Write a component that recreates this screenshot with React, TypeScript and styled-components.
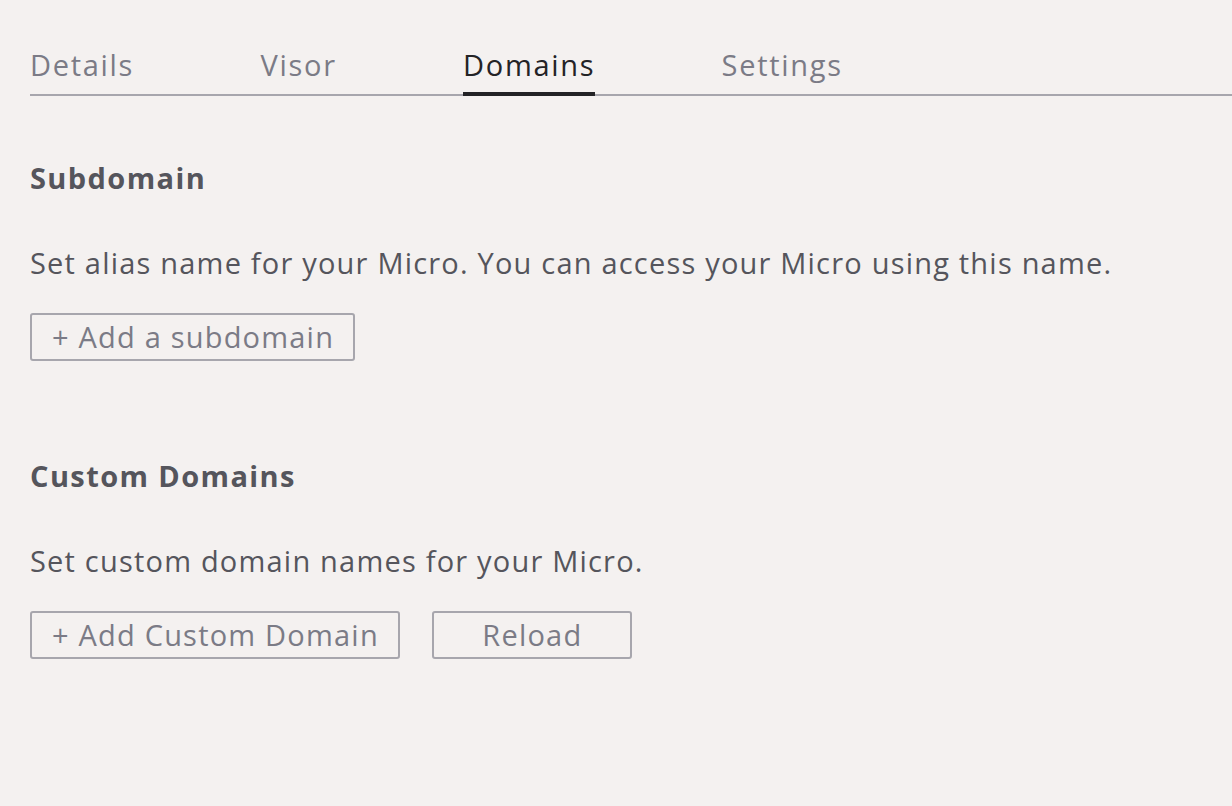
import React, { useState } from "react";
import styled, { createGlobalStyle } from "styled-components";

const GlobalStyle = createGlobalStyle`
  html, body {
    margin: 0;
    padding: 0;
    background: #f4f1f0;
  }
  body {
    font-family: "Open Sans", "Liberation Sans", sans-serif;
    -webkit-font-smoothing: antialiased;
  }
`;

const Page = styled.div`
  min-height: 806px;
  padding: 47px 0 0 30px;
  box-sizing: border-box;
  background: #f4f1f0;
`;

const TabBar = styled.div`
  display: flex;
  gap: 128px;
  border-bottom: 2px solid #a7a6ad;
`;

const Tab = styled.button<{ active: boolean }>`
  all: unset;
  cursor: pointer;
  font-size: 29px;
  letter-spacing: 1.7px;
  line-height: 36px;
  padding-bottom: 9px;
  margin-bottom: -2px;
  margin-right: -1.7px;
  color: ${({ active }) => (active ? "#232326" : "#7b7b86")};
  border-bottom: 4px solid ${({ active }) => (active ? "#232326" : "transparent")};
`;

const Section = styled.section<{ top: number }>`
  margin-top: ${({ top }) => top}px;
`;

const Heading = styled.h2`
  margin: 0;
  font-size: 29px;
  letter-spacing: 1.4px;
  line-height: 36px;
  font-weight: 700;
  color: #55555c;
`;

const Description = styled.p`
  margin: 49px 0 0;
  font-size: 29px;
  letter-spacing: 1.2px;
  line-height: 36px;
  color: #55555c;
`;

const Actions = styled.div`
  display: flex;
  gap: 32px;
  margin-top: 32px;
`;

const OutlineButton = styled.button<{ wide?: boolean }>`
  font-family: inherit;
  font-size: 29px;
  letter-spacing: 1.2px;
  line-height: 36px;
  padding: 4px 19px 4px 20px;
  min-width: ${({ wide }) => (wide ? "200px" : "0")};
  border: 2px solid #a7a6ad;
  border-radius: 3px;
  background: transparent;
  color: #7b7b86;
  cursor: pointer;
`;

const tabs = ["Details", "Visor", "Domains", "Settings"];

export default function App() {
  const [active, setActive] = useState("Domains");
  return (
    <Page>
      <GlobalStyle />
      <TabBar>
        {tabs.map((t) => (
          <Tab key={t} active={t === active} onClick={() => setActive(t)}>
            {t}
          </Tab>
        ))}
      </TabBar>

      <Section top={64}>
        <Heading>Subdomain</Heading>
        <Description>
          Set alias name for your Micro. You can access your Micro using this name.
        </Description>
        <Actions>
          <OutlineButton>+ Add a subdomain</OutlineButton>
        </Actions>
      </Section>

      <Section top={97}>
        <Heading>Custom Domains</Heading>
        <Description>Set custom domain names for your Micro.</Description>
        <Actions>
          <OutlineButton>+ Add Custom Domain</OutlineButton>
          <OutlineButton wide>Reload</OutlineButton>
        </Actions>
      </Section>
    </Page>
  );
}
